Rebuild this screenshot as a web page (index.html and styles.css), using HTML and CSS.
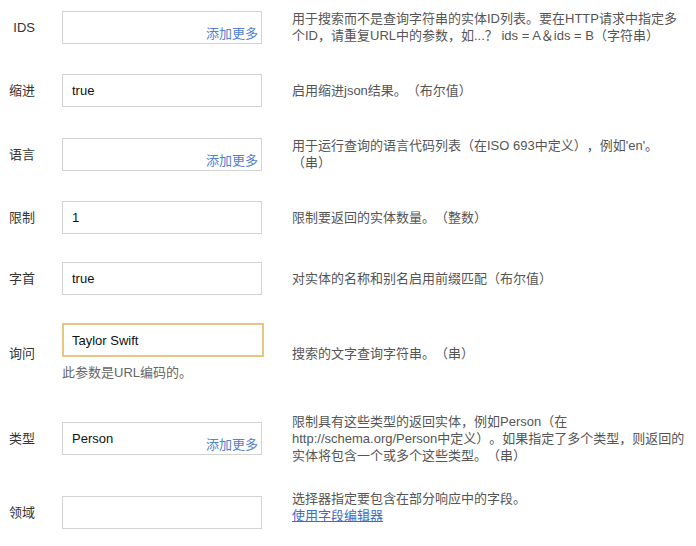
FILE: index.html
```html
<!DOCTYPE html>
<html lang="zh-CN">
<head>
<meta charset="utf-8">
<title>参数</title>
<link rel="stylesheet" href="styles.css">
</head>
<body>
<div class="form">
  <div class="row">
    <div class="label">IDS</div>
    <div class="control">
      <div class="field"><span class="value"></span><a class="more" href="#">添加更多</a></div>
    </div>
    <div class="desc">用于搜索而不是查询字符串的实体ID列表。要在HTTP请求中指定多个ID，请重复URL中的参数，如...？ ids = A＆ids = B（字符串）</div>
  </div>
  <div class="row">
    <div class="label">缩进</div>
    <div class="control">
      <div class="field"><span class="value">true</span></div>
    </div>
    <div class="desc">启用缩进json结果。（布尔值）</div>
  </div>
  <div class="row">
    <div class="label">语言</div>
    <div class="control">
      <div class="field"><span class="value"></span><a class="more" href="#">添加更多</a></div>
    </div>
    <div class="desc">用于运行查询的语言代码列表（在ISO 693中定义），例如'en'。（串）</div>
  </div>
  <div class="row">
    <div class="label">限制</div>
    <div class="control">
      <div class="field"><span class="value">1</span></div>
    </div>
    <div class="desc">限制要返回的实体数量。（整数）</div>
  </div>
  <div class="row row-tight">
    <div class="label">字首</div>
    <div class="control">
      <div class="field"><span class="value">true</span></div>
    </div>
    <div class="desc">对实体的名称和别名启用前缀匹配（布尔值）</div>
  </div>
  <div class="row row-tight">
    <div class="label">询问</div>
    <div class="control">
      <div class="field focused"><span class="value">Taylor Swift</span></div>
      <div class="hint">此参数是URL编码的。</div>
    </div>
    <div class="desc">搜索的文字查询字符串。（串）</div>
  </div>
  <div class="row">
    <div class="label">类型</div>
    <div class="control">
      <div class="field"><span class="value">Person</span><a class="more" href="#">添加更多</a></div>
    </div>
    <div class="desc">限制具有这些类型的返回实体，例如Person（在http://schema.org/Person中定义）。如果指定了多个类型，则返回的实体将包含一个或多个这些类型。（串）</div>
  </div>
  <div class="row row-last">
    <div class="label">领域</div>
    <div class="control">
      <div class="field"><span class="value"></span></div>
    </div>
    <div class="desc desc-editor">选择器指定要包含在部分响应中的字段。<br><a class="link" href="#">使用字段编辑器</a></div>
  </div>
</div>
</body>
</html>
```
FILE: styles.css
```css
html, body {
  margin: 0;
  padding: 0;
  background: #ffffff;
}

body {
  font-family: "Liberation Sans", "Noto Sans CJK SC", sans-serif;
  font-size: 13px;
  line-height: 17px;
  color: #222;
  text-spacing-trim: space-all;
}

.form {
  display: flex;
  flex-direction: column;
  gap: 30px;
  padding-top: 10px;
}

.row {
  display: grid;
  grid-template-columns: 35px 203px 396px;
  column-gap: 27px;
  align-items: center;
}

.row-tight {
  margin-top: -2px;
}

.row-last {
  margin-top: -4px;
}

.label {
  text-align: right;
  color: #333;
}

.control {
  display: flex;
  flex-direction: column;
}

.field {
  box-sizing: border-box;
  width: 200px;
  height: 33px;
  border: 1px solid #d3d3d3;
  padding: 0 3px 0 9px;
  display: flex;
  align-items: center;
  justify-content: space-between;
  background: #fff;
  color: #111;
}

.field.focused {
  width: 202px;
  height: 34px;
  border: 2px solid #e5c683;
  padding-left: 8px;
}

.more {
  align-self: flex-end;
  margin-bottom: 1px;
  color: #5080cf;
  text-decoration: none;
  white-space: nowrap;
}

.hint {
  margin-top: 6px;
  line-height: 20px;
  color: #666;
}

.desc {
  color: #555;
}

.desc-editor {
  padding-bottom: 10px;
}

.link {
  color: #3b6cc6;
  text-decoration: underline;
}
```
